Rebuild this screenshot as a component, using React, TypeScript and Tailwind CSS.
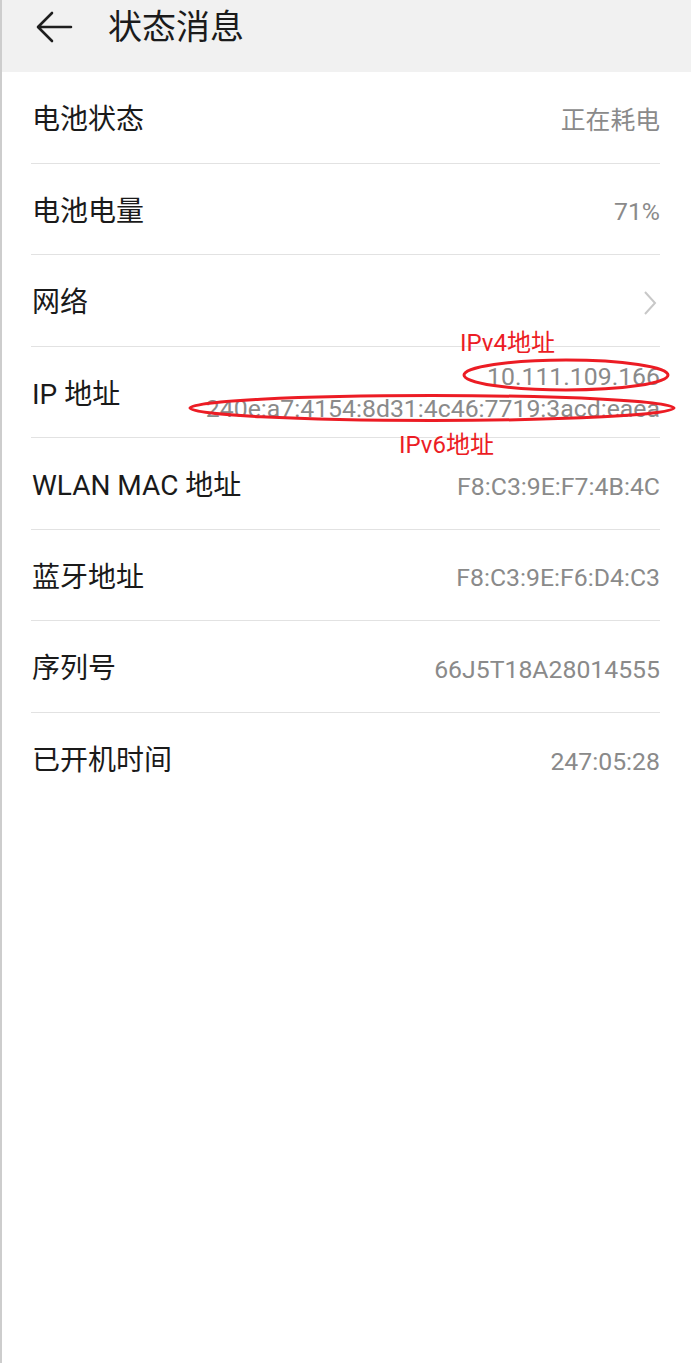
import React from "react";

interface Row {
  label: string;
  value?: string;
  chevron?: boolean;
}

const rows: Row[] = [
  { label: "电池状态", value: "正在耗电" },
  { label: "电池电量", value: "71%" },
  { label: "网络", chevron: true },
];

const rowsAfter: Row[] = [
  { label: "WLAN MAC 地址", value: "F8:C3:9E:F7:4B:4C" },
  { label: "蓝牙地址", value: "F8:C3:9E:F6:D4:C3" },
  { label: "序列号", value: "66J5T18A28014555" },
  { label: "已开机时间", value: "247:05:28" },
];

const font = { fontFamily: 'Roboto, "Noto Sans CJK SC", sans-serif' };

function InfoRow({ row, last }: { row: Row; last?: boolean }) {
  return (
    <div className={`flex h-[91.5px] items-center justify-between pt-[6px] ${last ? "" : "border-b border-[#e2e2e2]"}`}>
      <span className="pl-[1px] text-[28px] text-[#1a1a1a]">{row.label}</span>
      {row.value && <span className="text-[24.8px] text-[#8a8a8a]">{row.value}</span>}
      {row.chevron && (
        <svg width="16" height="26" viewBox="0 0 16 26" className="mr-[2px]">
          <path d="M3 2l10 11L3 24" fill="none" stroke="#c8c8c8" strokeWidth="2" />
        </svg>
      )}
    </div>
  );
}

export default function App() {
  return (
    <div className="min-h-screen w-[691px] border-l-2 border-[#cdcdcd] bg-white" style={font}>
      {/* Header */}
      <div className="flex h-[72px] items-center bg-[#f1f1f1] pb-[18px]">
        <svg width="40" height="40" viewBox="0 0 40 40" className="ml-[32px]">
          <path d="M37 20H5M18 6L4 20l14 14" fill="none" stroke="#1e1e1e" strokeWidth="2.6" strokeLinecap="round" strokeLinejoin="round" />
        </svg>
        <h1 className="ml-[34px] text-[34px] font-normal text-[#1b1b1b]">状态消息</h1>
      </div>

      <div className="pl-[29px] pr-[31px]">
        {rows.map((r) => (
          <InfoRow key={r.label} row={r} />
        ))}

        {/* IP row with annotations */}
        <div className="relative flex h-[91.5px] items-center justify-between border-b border-[#e2e2e2]">
          <span className="pl-[1px] pt-[6px] text-[28px] text-[#1a1a1a]">IP 地址</span>
          <div className="flex flex-col items-end pt-[3px] text-[24.8px] leading-[32px] text-[#8a8a8a]">
            <span>10.111.109.166</span>
            <span>240e:a7:4154:8d31:4c46:7719:3acd:eaea</span>
          </div>
          <span className="absolute left-[429px] top-[-22px] text-[24px] text-[#ec1c24]">IPv4地址</span>
          <span className="absolute left-[368px] top-[80px] text-[24px] text-[#ec1c24]">IPv6地址</span>
          <svg className="pointer-events-none absolute left-[-31px] top-0" width="691" height="92" viewBox="0 0 691 92">
            <ellipse cx="566" cy="28" rx="102" ry="15" fill="none" stroke="#ec1c24" strokeWidth="3" />
            <ellipse cx="432" cy="61" rx="242" ry="12.5" fill="none" stroke="#ec1c24" strokeWidth="3" />
          </svg>
        </div>

        {rowsAfter.map((r, i) => (
          <InfoRow key={r.label} row={r} last={i === rowsAfter.length - 1} />
        ))}
      </div>
    </div>
  );
}
